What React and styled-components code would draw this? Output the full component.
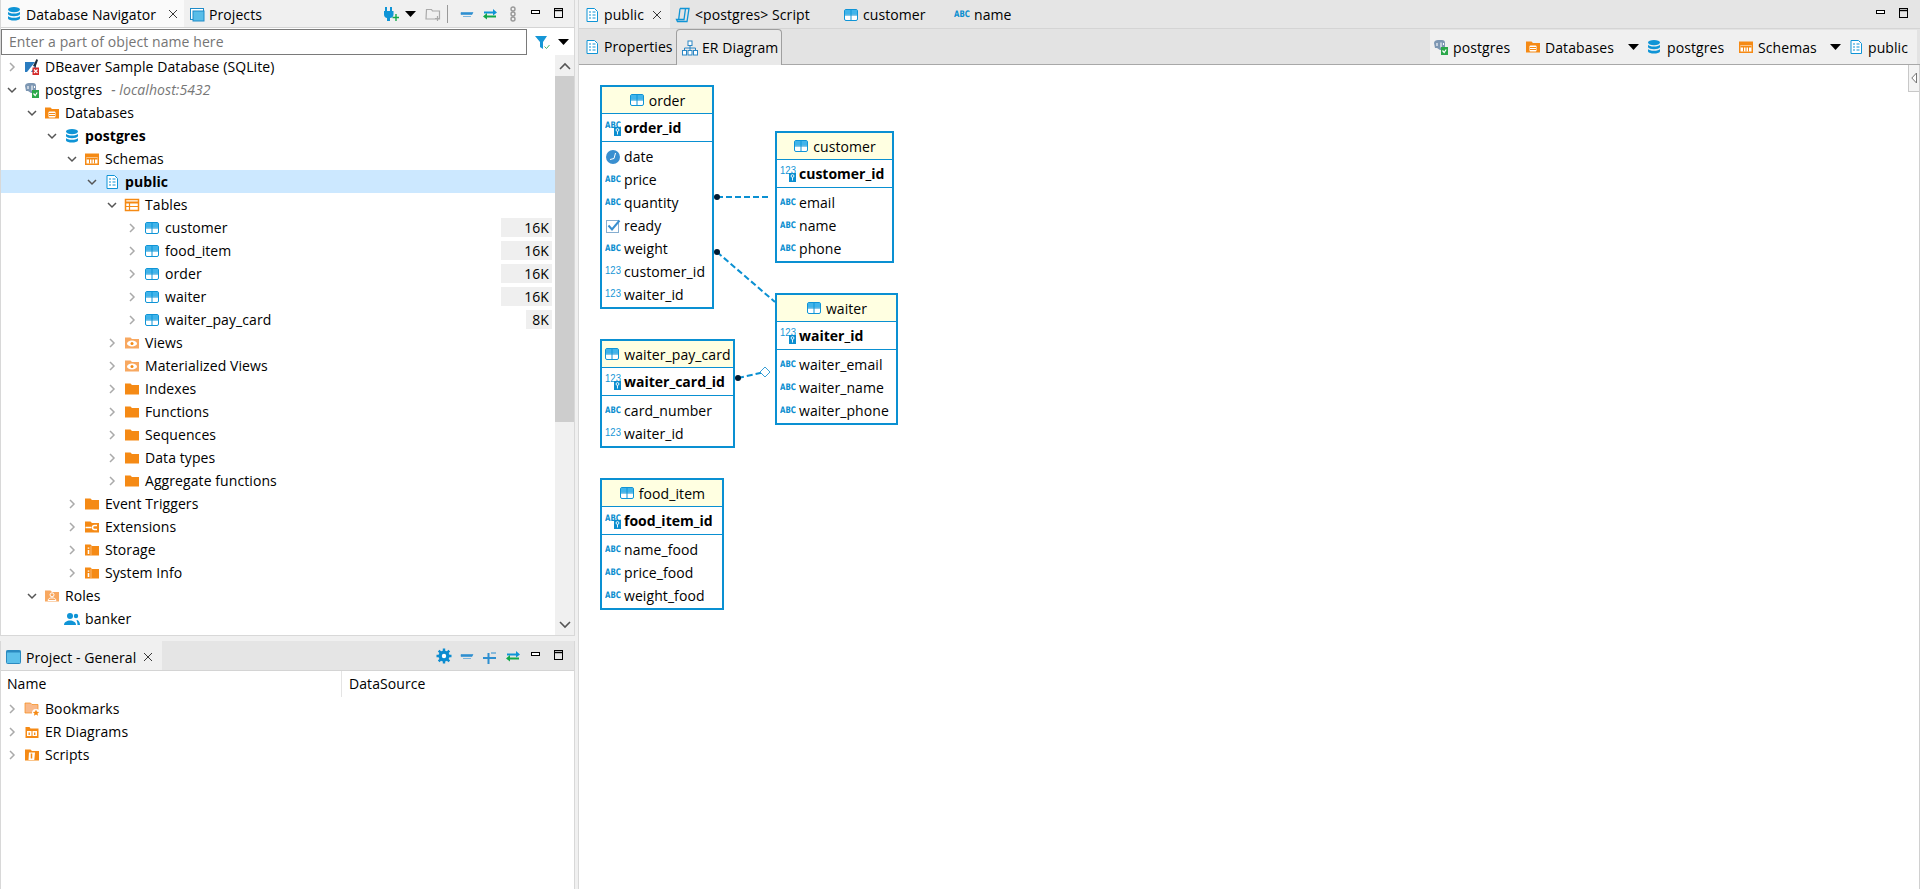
import React from 'react';
import styled, { createGlobalStyle } from 'styled-components';

const Global = createGlobalStyle`
  html, body { margin: 0; padding: 0; background: #f0f0f0; overflow: hidden; }
  * { box-sizing: border-box; }
`;

const BLUE = '#0f94d6';
const OR = '#f58a15';

const Svg = styled.svg`
  flex: none;
  display: block;
  margin-left: ${p => p.$ml || 0}px;
  margin-right: ${p => p.$mr || 0}px;
`;

const folderPath = 'M1 2.500h5.500l1.500 1.500H15V13.500H1z';
const shapes = {
  table: <><rect x="1.500" y="2.500" width="13" height="11" rx="1.500" fill="#fff" stroke={BLUE} /><rect x="2" y="3" width="12" height="4.500" fill="#41b4ea" /><path d="M1.500 8h13M8 3v10.500" stroke={BLUE} /></>,
  db: <><ellipse cx="8" cy="3.600" rx="6" ry="2.600" fill={BLUE} /><path d="M2 5.800c1 2.400 11 2.400 12 0v2.400c-1 2.600-11 2.600-12 0zM2 10c1 2.400 11 2.400 12 0v2.400c-1 2.800-11 2.800-12 0z" fill={BLUE} /></>,
  schema: <><path d="M3 1.500h7.500l3 3v10h-10.500z" fill="#fff" stroke={BLUE} /><path d="M5 5h2M8.500 5h3M5 8h2M8.500 8h3M5 11h2M8.500 11h3" stroke={BLUE} strokeWidth="1.200" /></>,
  folder: <path d={folderPath} fill={OR} />,
  folderDb: <><path d={folderPath} fill={OR} /><rect x="4.500" y="6.500" width="7" height="6" rx="1" fill="#fff" /><path d="M5 8.500h6M5 10.500h6" stroke={OR} /></>,
  folderSchema: <><path d="M1 2.500h14V14H1z" fill={OR} /><rect x="2.500" y="6" width="11" height="6.500" fill="#fff" /><path d="M2.500 7.500h11" stroke={OR} strokeWidth="2" /><path d="M5.500 7.500v5M8 7.500v5M10.500 7.500v5" stroke={OR} /></>,
  folderTable: <><rect x="1.500" y="2.500" width="13" height="11" fill="#fff" stroke={OR} strokeWidth="1.500" /><path d="M1.500 5.500h13" stroke={OR} strokeWidth="2" /><path d="M1.500 9.500h13M5.500 5v8.500" stroke={OR} strokeWidth="1.200" /></>,
  folderView: <><path d={folderPath} fill="#f8a860" /><ellipse cx="8" cy="8.500" rx="5" ry="3" fill="#fff" /><circle cx="8" cy="8.500" r="1.500" fill={OR} /></>,
  folderExt: <><path d={folderPath} fill={OR} /><path d="M1.500 8.500h6" stroke="#fff" strokeWidth="1.500" /><path d="M13 6.500h-2.500a2 2 0 0 0 0 4H13" fill="none" stroke="#fff" strokeWidth="1.500" /></>,
  folderInfo: <><path d={folderPath} fill={OR} /><path d="M4.500 5.500v1.200M4.500 8v4" stroke="#fff" strokeWidth="1.600" /><path d="M7 4v9.500" stroke="#fbc78f" strokeWidth=".8" /></>,
  folderRoles: <><path d={folderPath} fill="#f8a860" /><circle cx="8" cy="6.800" r="2" fill="none" stroke="#fff" /><path d="M4 12.500c0-3.500 8-3.500 8 0z" fill="none" stroke="#fff" /></>,
  user: <><circle cx="6" cy="5" r="3" fill={BLUE} /><path d="M0 14c0-6 12-6 12 0z" fill={BLUE} /><circle cx="12" cy="5" r="2.200" fill={BLUE} /><path d="M12.500 9c2 0 3.500 2 3.500 5h-2.500c0-2-.5-3.500-1-5z" fill={BLUE} /></>,
  bookmarks: <><path d="M1 2h5.500l1.500 1.500H14V12H1z" fill="#f9b98a" stroke={OR} strokeWidth=".7" /><circle cx="12" cy="12" r="4" fill="#fff" /><path d="M12 8.500l1 2.200 2.200.2-1.700 1.500.6 2.300-2.100-1.200-2.100 1.200.6-2.300-1.700-1.500 2.200-.2z" fill={OR} /></>,
  er: <><path d="M1.500 3h4l1 1.500h8V14h-13z" fill={OR} /><rect x="3" y="7" width="4.500" height="5" fill="#fff" /><rect x="8.500" y="7" width="4.500" height="5" fill="#fff" /><path d="M5.200 8.500v2.500M10.700 8.500v2.500" stroke={OR} strokeWidth="1.300" /></>,
  scripts: <><path d={folderPath} fill={OR} /><path d="M5 5.500h6l-.7 7.500H4.500z" fill="#fff" /><path d="M7.500 6.500v5" stroke={OR} strokeWidth="1.500" /></>,
  sqlite: <><rect x="1" y="3" width="11" height="10" fill="#2a7cc0" /><path d="M3 13L11 3l2 1-6 9z" fill="#fff" /><path d="M12.500 0L9 7l2.500 1L14 1z" fill="#1c2a3a" /><rect x="8.500" y="8.500" width="6.500" height="7.500" fill="#d42a2a" /><path d="M10 10.500l3.500 3.500M13.500 10.500l-3.500 3.500" stroke="#fff" strokeWidth="1.100" /></>,
  pg: <><path d="M1 4c0-2 2-3 4-3h4c2 0 3 1 3 3v5l-2 2H7L4 9H2z" fill="#7d97b3" /><path d="M4 4v3M8 3.500v5M10.500 4v2" stroke="#fff" strokeWidth="1.100" /><rect x="8" y="8" width="7" height="8" fill="#2ba84a" /><path d="M9.500 11.500l1.700 2 2-3" fill="none" stroke="#fff" strokeWidth="1.200" /></>,
  plug: <><path d="M3 1v4M8 1v4" stroke={BLUE} strokeWidth="2" /><path d="M1 5h9.500v3.500c0 2.500-2 3.500-3.500 3.500v3H4v-3c-1.500 0-3-1.200-3-3.500z" fill={BLUE} /><path d="M13 8v7M9.500 11.500h7" stroke="#12a84a" strokeWidth="1.400" /></>,
  folderPlus: <><path d="M1.500 3.500h5l1 1.500h7v8h-13.500z" fill="none" stroke="#aaa" strokeWidth="1.200" /><path d="M12.500 10v5M10 12.500h5" stroke="#aaa" strokeWidth="1.200" /></>,
  collapse: <path d="M2 6.500h12L13 8.500H2zM4 10.500h8" fill="#2f8fd0" stroke="#2f8fd0" strokeWidth=".6" />,
  expand: <><path d="M1 10h13M6.500 5v11" stroke="#2f8fd0" strokeWidth="2" /><path d="M9 5h5" stroke="#2f8fd0" strokeWidth="1" /></>,
  link: <><path d="M2 6.500h10" stroke={BLUE} strokeWidth="2" /><path d="M11 3l4 3.500-4 3z" fill={BLUE} /><path d="M5 10.500h9" stroke="#12a84a" strokeWidth="2" /><path d="M5 7l-4 3.500 4 3z" fill="#12a84a" /></>,
  chain: <><circle cx="8" cy="3" r="2" fill="none" stroke="#999" strokeWidth="1.400" /><circle cx="8" cy="8" r="2" fill="none" stroke="#999" strokeWidth="1.400" /><circle cx="8" cy="13" r="2" fill="none" stroke="#999" strokeWidth="1.400" /></>,
  min: <rect x="3.500" y="4.500" width="8" height="3" fill="#fff" stroke="#000" />,
  max: <><rect x="3.500" y="2.500" width="8" height="9" fill="none" stroke="#000" /><path d="M3.500 4.500h8" stroke="#000" strokeWidth="1.400" /></>,
  filter: <><path d="M1 2h12L9 8v7L6 13V8z" fill="#1596d6" /><path d="M10.500 12.500l2 2 3-3.500" fill="none" stroke="#36a852" strokeWidth=".9" /></>,
  gear: <><circle cx="8" cy="8" r="5.500" fill="#0c8cd0" /><path d="M8 .5v15M.5 8h15M2.700 2.700l10.600 10.600M13.300 2.700L2.700 13.300" stroke="#0c8cd0" strokeWidth="2.400" /><circle cx="8" cy="8" r="2.200" fill="#fff" /></>,
  projects: <><rect x="1.500" y="2.500" width="13" height="11" fill="#fff" stroke="#1f8bc8" /><rect x="4" y="5" width="11" height="10" fill="#59bde8" stroke="#1f8bc8" /></>,
  project: <><rect x=".5" y="1.500" width="14" height="13" rx="1" fill="#5cc0ea" stroke="#2b8ac0" /><path d="M.5 2.500h14" stroke="#2b8ac0" strokeWidth="2" /></>,
  script: <><path d="M5 1.500h9l-2 13H2.500l-1-2h7.500l1.500-11" fill="none" stroke={BLUE} strokeWidth="1.300" /><path d="M5 1.500L3.700 12.500" stroke={BLUE} strokeWidth="1.300" /></>,
  diagram: <><rect x="6" y="1" width="4" height="4.500" fill="#fff" stroke="#2a86c4" /><path d="M8 5.500V8M2.500 10V8h11v2M8 8v2" fill="none" stroke="#2a86c4" /><rect x=".5" y="10.500" width="4" height="4.500" fill="#fff" stroke="#2a86c4" /><rect x="6" y="10.500" width="4" height="4.500" fill="#fff" stroke="#2a86c4" /><rect x="11.500" y="10.500" width="4" height="4.500" fill="#fff" stroke="#2a86c4" /></>,
  clock: <><circle cx="8" cy="8" r="7" fill="#3a8fd0" /><path d="M10.500 4L9 9.500l-4 1" fill="none" stroke="#fff" strokeWidth="1" /></>,
  check: <><rect x="1.500" y="2.500" width="12" height="12" fill="#fff" stroke="#86aed0" /><path d="M3.500 7.500l3.500 4 7.500-9" fill="none" stroke="#3a8fd0" strokeWidth="2" /></>,
  close: <path d="M4 4l8 8M12 4l-8 8" stroke="#222" strokeWidth=".9" />,
};

/* column type markers: small text in a fixed box, with a key badge over it for primary keys */
const TypeBox = styled.span`
  position: relative;
  display: block;
  flex: none;
  width: 16px;
  height: 16px;
`;

const TypeText = styled.span`
  position: absolute;
  left: 0;
  top: ${p => (p.$keyed ? -1 : 1)}px;
  width: 16px;
  height: 12px;
  line-height: 12px;
  text-align: center;
  letter-spacing: 0;
  white-space: nowrap;
  font-family: ${p => (p.$num ? '"Liberation Sans"' : '"DejaVu Sans"')}, sans-serif;
  font-size: ${p => (p.$num ? 9.5 : 7)}px;
  font-weight: ${p => (p.$num ? 400 : 700)};
  color: ${p => (p.$num ? '#1596d6' : '#0b8ed0')};
  transform: scaleY(${p => (p.$num ? 1.15 : 1.3)});
`;

const KeyBadge = styled.svg`
  position: absolute;
  right: 0;
  bottom: 0;
  width: 7px;
  height: 9px;
`;

const TypeIcon = ({ kind, keyed }) => (
  <TypeBox>
    <TypeText $num={kind === 'num'} $keyed={keyed}>{kind === 'num' ? '123' : 'ABC'}</TypeText>
    {keyed && (
      <KeyBadge viewBox="0 0 7 9">
        <rect width="7" height="9" fill="#0b8ed0" />
        <circle cx="3.500" cy="3" r="1.400" fill="none" stroke="#fff" strokeWidth=".9" />
        <path d="M3.500 4.400V7.500" stroke="#fff" strokeWidth=".9" />
      </KeyBadge>
    )}
  </TypeBox>
);

const Icon = ({ name, ml, mr, size = 16 }) => {
  if (name === 'abc' || name === 'num') return <TypeIcon kind={name} />;
  if (name === 'abcKey') return <TypeIcon kind="abc" keyed />;
  if (name === 'numKey') return <TypeIcon kind="num" keyed />;
  return <Svg width={size} height={size} viewBox="0 0 16 16" $ml={ml} $mr={mr} aria-hidden="true">{shapes[name]}</Svg>;
};

const Caret = () => (
  <Svg width="11" height="6" viewBox="0 0 11 6"><path d="M0 0h11L5.500 6z" fill="#000" /></Svg>
);

const Page = styled.div`
  width: 1920px;
  height: 889px;
  display: flex;
  background: #f0f0f0;
  font-family: "Open Sans", "Noto Sans", sans-serif;
  font-size: 14px;
  letter-spacing: 0.08px;
  color: #000;
  overflow: hidden;
`;

const LeftColumn = styled.div`
  width: 575px;
  flex: none;
  display: flex;
  flex-direction: column;
  gap: 5px;
`;

const NavPanel = styled.section`
  height: 636px;
  display: flex;
  flex-direction: column;
  background: #fff;
  border-right: 1px solid #d8d8d8;
  border-left: 1px solid #d8d8d8;
  border-bottom: 1px solid #d8d8d8;
`;

const TabStrip = styled.div`
  height: ${p => p.$h || 28}px;
  flex: none;
  display: flex;
  align-items: stretch;
  background: ${p => p.$bg || '#e5e5e5'};
  border-bottom: 1px solid #d4d4d4;
`;

const Tab = styled.div`
  display: flex;
  align-items: center;
  padding-left: 5px;
  padding-top: ${p => p.$pt ?? 1}px;
  width: ${p => p.$w}px;
  flex: none;
  white-space: nowrap;
  background: ${p => p.$bg || 'transparent'};
`;

const TabLabel = styled.span`
  margin-left: ${p => p.$ml ?? 4}px;
  margin-right: ${p => p.$mr || 0}px;
`;

const ToolGroup = styled.div`
  margin-left: auto;
  display: flex;
  align-items: center;
  gap: ${p => p.$gap || 7}px;
  padding-right: ${p => p.$pr || 5}px;
`;

const ToolSep = styled.span`
  width: 1px;
  height: 18px;
  background: #999;
`;

const FilterRow = styled.div`
  height: 27px;
  flex: none;
  display: flex;
  align-items: center;
  padding-right: 6px;
  background: #fff;
`;

const FilterBox = styled.div`
  width: 526px;
  height: 26px;
  flex: none;
  border: 1px solid #7a7a7a;
  padding-left: 7px;
  line-height: 24px;
  color: #757575;
`;

const FilterActions = styled.div`
  display: flex;
  align-items: center;
  gap: 8px;
  margin-left: 7px;
`;

const TreeWrap = styled.div`
  flex: 1;
  min-height: 0;
  display: flex;
`;

const TreeList = styled.div`
  flex: 1;
  min-width: 0;
  overflow: hidden;
`;

const Row = styled.div`
  height: 23px;
  display: flex;
  align-items: center;
  white-space: nowrap;
  padding-left: ${p => p.$level * 20 + 5}px;
  background: ${p => (p.$selected ? '#cce8ff' : 'transparent')};
  font-weight: ${p => (p.$bold ? 700 : 400)};
`;

const ChevronBox = styled.svg`
  width: 12px;
  height: 12px;
  flex: none;
  margin-right: 6px;
`;

const Chevron = ({ open, none }) => (
  <ChevronBox viewBox="0 0 12 12">
    {none ? null : open
      ? <path d="M2 4l4 4 4-4" fill="none" stroke="#555" strokeWidth="1.500" />
      : <path d="M4 2l4 4-4 4" fill="none" stroke="#aaa" strokeWidth="1.500" />}
  </ChevronBox>
);

const RowLabel = styled.span`
  margin-left: 5px;
`;

const Hint = styled.span`
  margin-left: 9px;
  font-style: italic;
  color: #777;
`;

const SizeBar = styled.span`
  margin-left: auto;
  margin-right: 3px;
  width: ${p => p.$w}px;
  height: 19px;
  background: #efefef;
  text-align: right;
  line-height: 19px;
  padding-right: 3px;
`;

const ScrollTrack = styled.div`
  width: 19px;
  flex: none;
  display: flex;
  flex-direction: column;
  background: #f0f0f0;
`;

const ScrollBtn = styled.div`
  height: 21px;
  flex: none;
  display: flex;
  align-items: center;
  justify-content: center;
`;

const ScrollThumb = styled.div`
  height: 346px;
  flex: none;
  background: #cdcdcd;
`;

const ScrollRest = styled.div`
  flex: 1;
`;

const ProjectPanel = styled.section`
  flex: 1;
  min-height: 0;
  display: flex;
  flex-direction: column;
  background: #fff;
  border-left: 1px solid #d8d8d8;
  border-right: 1px solid #d8d8d8;
`;

const ColumnHeader = styled.div`
  height: 26px;
  flex: none;
  display: grid;
  grid-template-columns: 341px 1fr;
  background: #fff;
`;

const ColumnCell = styled.div`
  padding-left: ${p => p.$pl}px;
  line-height: 26px;
  border-right: ${p => (p.$divider ? '1px solid #e4e4e4' : 'none')};
`;

const RowsBox = styled.div`
  padding-top: 0;
`;

const EditorColumn = styled.div`
  flex: 1;
  min-width: 0;
  margin-left: 3px;
  display: flex;
  flex-direction: column;
  background: #fff;
  border-left: 1px solid #d8d8d8;
`;

const SubTabStrip = styled.div`
  height: 36px;
  flex: none;
  display: flex;
  align-items: stretch;
  background: #e3e3e3;
  border-bottom: 1px solid #a8a8a8;
  padding-right: 3px;
`;

const SubTab = styled.div`
  display: flex;
  align-items: center;
  flex: none;
  padding-left: 5px;
  width: ${p => p.$w}px;
  white-space: nowrap;
  ${p => p.$active && `
    background: #e9e9e9;
    border: 1px solid #9f9f9f;
    border-bottom: none;
    border-radius: 4px 4px 0 0;
    margin-bottom: -1px;
  `}
`;

const Breadcrumb = styled.div`
  margin-left: auto;
  width: 487px;
  margin-top: 1px;
  display: flex;
  align-items: center;
  background: #f0f0f0;
  padding-left: 3px;
  white-space: nowrap;
`;

const Crumb = styled.span`
  display: flex;
  align-items: center;
  flex: none;
  width: ${p => p.$w}px;
`;

const Canvas = styled.div`
  flex: 1;
  min-height: 0;
  position: relative;
  background: #fff;
  border-right: 1px solid #d0d0d0;
`;

const Sash = styled.div`
  position: absolute;
  top: 0;
  right: 0;
  width: 11px;
  height: 27px;
  border: 1px solid #c8c8c8;
  border-top: none;
  border-right: none;
  display: flex;
  align-items: center;
  justify-content: center;
  background: #f4f4f4;
`;

const Links = styled.svg`
  position: absolute;
  inset: 0;
  width: 100%;
  height: 100%;
`;

const Node = styled.div`
  position: absolute;
  left: ${p => p.$x}px;
  top: ${p => p.$y}px;
  width: ${p => p.$w}px;
  border: 2px solid #0a90d2;
  background: #fff;
  white-space: nowrap;
`;

const NodeHead = styled.div`
  height: 27px;
  display: flex;
  align-items: center;
  justify-content: center;
  background: #ffffe1;
  border-bottom: 1px solid #0a90d2;
  gap: 4px;
`;

const NodeKey = styled.div`
  height: 28px;
  display: flex;
  align-items: center;
  padding-left: 3px;
  font-weight: 700;
  letter-spacing: 0;
  border-bottom: 1px solid #0a90d2;
  gap: 3px;
`;

const NodeCols = styled.div`
  padding: 3px 0 1px;
`;

const NodeCol = styled.div`
  height: 23px;
  display: flex;
  align-items: center;
  padding-left: 3px;
  gap: 3px;
`;

const nodes = [
  { title: 'order', x: 21, y: 20, w: 114, keyIcon: 'abcKey', key: 'order_id', cols: [['clock', 'date'], ['abc', 'price'], ['abc', 'quantity'], ['check', 'ready'], ['abc', 'weight'], ['num', 'customer_id'], ['num', 'waiter_id']] },
  { title: 'customer', x: 196, y: 66, w: 119, keyIcon: 'numKey', key: 'customer_id', cols: [['abc', 'email'], ['abc', 'name'], ['abc', 'phone']] },
  { title: 'waiter', x: 196, y: 228, w: 123, keyIcon: 'numKey', key: 'waiter_id', cols: [['abc', 'waiter_email'], ['abc', 'waiter_name'], ['abc', 'waiter_phone']] },
  { title: 'waiter_pay_card', x: 21, y: 274, w: 135, keyIcon: 'numKey', key: 'waiter_card_id', cols: [['abc', 'card_number'], ['num', 'waiter_id']] },
  { title: 'food_item', x: 21, y: 413, w: 124, keyIcon: 'abcKey', key: 'food_item_id', cols: [['abc', 'name_food'], ['abc', 'price_food'], ['abc', 'weight_food']] },
];

const tree = [
  { l: 0, i: 'sqlite', t: 'DBeaver Sample Database (SQLite)' },
  { l: 0, o: 1, i: 'pg', t: 'postgres', hint: '- localhost:5432' },
  { l: 1, o: 1, i: 'folderDb', t: 'Databases' },
  { l: 2, o: 1, i: 'db', t: 'postgres', b: 1 },
  { l: 3, o: 1, i: 'folderSchema', t: 'Schemas' },
  { l: 4, o: 1, i: 'schema', t: 'public', b: 1, s: 1 },
  { l: 5, o: 1, i: 'folderTable', t: 'Tables' },
  { l: 6, i: 'table', t: 'customer', size: 51, sz: '16K' },
  { l: 6, i: 'table', t: 'food_item', size: 51, sz: '16K' },
  { l: 6, i: 'table', t: 'order', size: 51, sz: '16K' },
  { l: 6, i: 'table', t: 'waiter', size: 51, sz: '16K' },
  { l: 6, i: 'table', t: 'waiter_pay_card', size: 26, sz: '8K' },
  { l: 5, i: 'folderView', t: 'Views' },
  { l: 5, i: 'folderView', t: 'Materialized Views' },
  { l: 5, i: 'folder', t: 'Indexes' },
  { l: 5, i: 'folder', t: 'Functions' },
  { l: 5, i: 'folder', t: 'Sequences' },
  { l: 5, i: 'folder', t: 'Data types' },
  { l: 5, i: 'folder', t: 'Aggregate functions' },
  { l: 3, i: 'folder', t: 'Event Triggers' },
  { l: 3, i: 'folderExt', t: 'Extensions' },
  { l: 3, i: 'folderInfo', t: 'Storage' },
  { l: 3, i: 'folderInfo', t: 'System Info' },
  { l: 1, o: 1, i: 'folderRoles', t: 'Roles' },
  { l: 2, n: 1, i: 'user', t: 'banker' },
  { l: 2, n: 1, i: 'user', t: '' },
];

const TreeRow = ({ r }) => (
  <Row $level={r.l} $selected={r.s} $bold={r.b}>
    <Chevron open={r.o} none={r.n} />
    <Icon name={r.i} />
    {r.t && <RowLabel>{r.t}</RowLabel>}
    {r.hint && <Hint>{r.hint}</Hint>}
    {r.size && <SizeBar $w={r.size}>{r.sz}</SizeBar>}
  </Row>
);

export default function App() {
  return (
    <Page>
      <Global />
      <LeftColumn>
        <NavPanel>
          <TabStrip $bg="#f0f0f0">
            <Tab $w={183} $bg="#fafafa">
              <Icon name="db" />
              <TabLabel>Database Navigator</TabLabel>
              <Icon name="close" ml={9} />
            </Tab>
            <Tab $w={120}>
              <Icon name="projects" />
              <TabLabel>Projects</TabLabel>
            </Tab>
            <ToolGroup $gap={6} $pr={7}>
              <Icon name="plug" />
              <Caret />
              <Icon name="folderPlus" ml={3} />
              <ToolSep />
              <Icon name="collapse" ml={5} />
              <Icon name="link" ml={1} />
              <Icon name="chain" ml={1} />
              <Icon name="min" ml={1} />
              <Icon name="max" ml={1} />
            </ToolGroup>
          </TabStrip>
          <FilterRow>
            <FilterBox>Enter a part of object name here</FilterBox>
            <FilterActions>
              <Icon name="filter" />
              <Caret />
            </FilterActions>
          </FilterRow>
          <TreeWrap>
            <TreeList>
              {tree.map((r, i) => <TreeRow key={i} r={r} />)}
            </TreeList>
            <ScrollTrack>
              <ScrollBtn><svg width="12" height="8" viewBox="0 0 12 8"><path d="M1 7l5-5 5 5" fill="none" stroke="#555" strokeWidth="1.600" /></svg></ScrollBtn>
              <ScrollThumb />
              <ScrollRest />
              <ScrollBtn><svg width="12" height="8" viewBox="0 0 12 8"><path d="M1 1l5 5 5-5" fill="none" stroke="#555" strokeWidth="1.600" /></svg></ScrollBtn>
            </ScrollTrack>
          </TreeWrap>
        </NavPanel>
        <ProjectPanel>
          <TabStrip $h={30} $bg="#e5e5e5">
            <Tab $w={161} $bg="#f0f0f0" $pt={3}>
              <Icon name="project" />
              <TabLabel>Project - General</TabLabel>
              <Icon name="close" ml={4} />
            </Tab>
            <ToolGroup $gap={7} $pr={7}>
              <Icon name="gear" />
              <Icon name="collapse" />
              <Icon name="expand" />
              <Icon name="link" />
              <Icon name="min" />
              <Icon name="max" />
            </ToolGroup>
          </TabStrip>
          <ColumnHeader>
            <ColumnCell $pl={6} $divider>Name</ColumnCell>
            <ColumnCell $pl={7}>DataSource</ColumnCell>
          </ColumnHeader>
          <RowsBox>
            <Row $level={0}><Chevron /><Icon name="bookmarks" /><RowLabel>Bookmarks</RowLabel></Row>
            <Row $level={0}><Chevron /><Icon name="er" /><RowLabel>ER Diagrams</RowLabel></Row>
            <Row $level={0}><Chevron /><Icon name="scripts" /><RowLabel>Scripts</RowLabel></Row>
          </RowsBox>
        </ProjectPanel>
      </LeftColumn>
      <EditorColumn>
        <TabStrip $h={29}>
          <Tab $w={91} $bg="#f0f0f0">
            <Icon name="schema" />
            <TabLabel>public</TabLabel>
            <Icon name="close" ml={5} />
          </Tab>
          <Tab $w={168}>
            <Icon name="script" />
            <TabLabel>&lt;postgres&gt; Script</TabLabel>
          </Tab>
          <Tab $w={111}>
            <Icon name="table" />
            <TabLabel>customer</TabLabel>
          </Tab>
          <Tab $w={60}>
            <Icon name="abc" />
            <TabLabel>name</TabLabel>
          </Tab>
          <ToolGroup $gap={7} $pr={8}>
            <Icon name="min" />
            <Icon name="max" />
          </ToolGroup>
        </TabStrip>
        <SubTabStrip>
          <SubTab $w={97}>
            <Icon name="schema" />
            <TabLabel>Properties</TabLabel>
          </SubTab>
          <SubTab $w={106} $active>
            <Icon name="diagram" />
            <TabLabel>ER Diagram</TabLabel>
          </SubTab>
          <Breadcrumb>
            <Crumb $w={92}><Icon name="pg" /><TabLabel>postgres</TabLabel></Crumb>
            <Crumb $w={103}><Icon name="folderDb" /><TabLabel>Databases</TabLabel></Crumb>
            <Crumb $w={18}><Caret /></Crumb>
            <Crumb $w={92}><Icon name="db" /><TabLabel $ml={5}>postgres</TabLabel></Crumb>
            <Crumb $w={92}><Icon name="folderSchema" /><TabLabel>Schemas</TabLabel></Crumb>
            <Crumb $w={18}><Caret /></Crumb>
            <Crumb $w={60}><Icon name="schema" /><TabLabel>public</TabLabel></Crumb>
          </Breadcrumb>
        </SubTabStrip>
        <Canvas>
          <Links>
            <g stroke="#0a90d2" strokeWidth="2" fill="none" strokeDasharray="6 3">
              <path d="M138 132H191" />
              <path d="M138 187L196 237" />
              <path d="M159 313L186 307" />
            </g>
            <circle cx="138" cy="132" r="3" fill="#001a33" />
            <circle cx="138" cy="187" r="3" fill="#001a33" />
            <circle cx="159" cy="313" r="3" fill="#001a33" />
            <path d="M186 302l5 5-5 5-5-5z" fill="#fff" stroke="#3a9fd6" strokeWidth="1" />
          </Links>
          {nodes.map(n => (
            <Node key={n.title} $x={n.x} $y={n.y} $w={n.w}>
              <NodeHead><Icon name="table" /><span>{n.title}</span></NodeHead>
              <NodeKey><Icon name={n.keyIcon} /><span>{n.key}</span></NodeKey>
              <NodeCols>
                {n.cols.map(c => (
                  <NodeCol key={c[1]}><Icon name={c[0]} /><span>{c[1]}</span></NodeCol>
                ))}
              </NodeCols>
            </Node>
          ))}
          <Sash>
            <svg width="6" height="12" viewBox="0 0 6 12"><path d="M5.500 1v10L.8 6z" fill="#fff" stroke="#777" /></svg>
          </Sash>
        </Canvas>
      </EditorColumn>
    </Page>
  );
}
